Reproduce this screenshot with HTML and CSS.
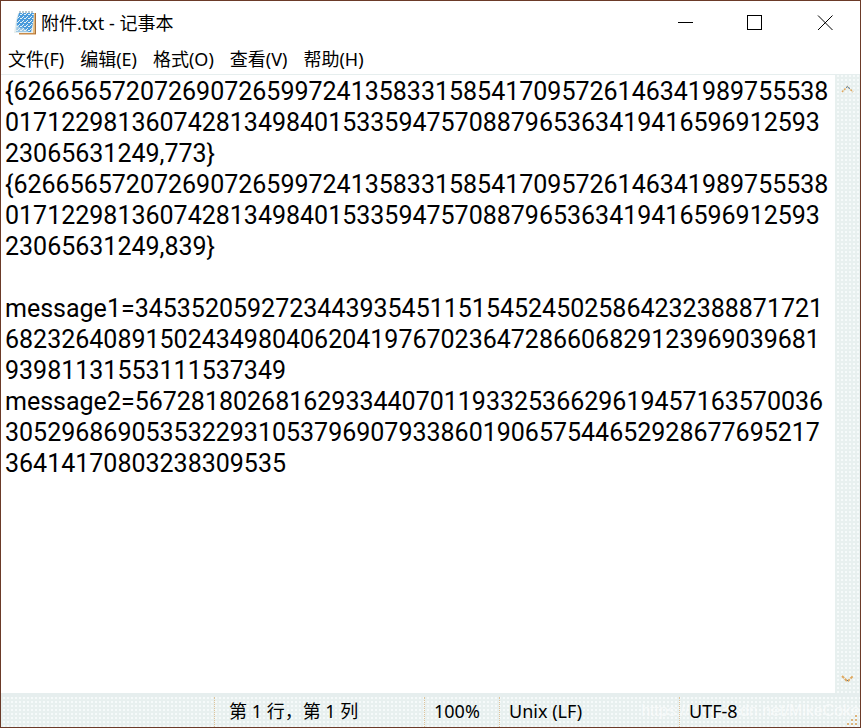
FILE: index.html
```html
<!DOCTYPE html>
<html lang="zh-CN">
<head>
<meta charset="utf-8">
<title>附件.txt - 记事本</title>
<link rel="stylesheet" href="styles.css">
</head>
<body>
<div class="window">
  <header class="titlebar">
    <svg class="app-icon" width="24" height="26" viewBox="0 0 24 26" aria-hidden="true">
      <defs>
        <pattern id="dither" width="4" height="4" patternUnits="userSpaceOnUse">
          <path d="M0 0h1v1h-1zM2 2h1v1h-1zM3 0h1v1h-1zM1 3h1v1h-1z" fill="#e6f1f4"/>
        </pattern>
      </defs>
      <path d="M20 3h3v21h-3z" fill="#e5b878"/>
      <path d="M6 23h17v1.500H6z" fill="#c98a48"/>
      <path d="M22 3h1v21h-1z" fill="#a8703c"/>
      <path d="M5 3h16l-1 20H1L3 10z" fill="#e6eeee"/>
      <path d="M6 3h15l-1 10-2 9H3L4 10z" fill="#4a9bdc"/>
      <path d="M6 3h15l-1 10-2 9H3L4 10z" fill="url(#dither)"/>
      <path d="M3 14l9 8H2zM9 17l7 5H7z" fill="#e6eeee" opacity=".55"/>
      <path d="M7 1v2M10 1v2M13 1v2M16 1v2M19 1v2" stroke="#6f8f9f" stroke-width="1"/>
    </svg>
    <h1 class="title">附件.txt - 记事本</h1>
    <div class="controls">
      <button type="button" aria-label="最小化"><svg width="16" height="16" viewBox="0 0 16 16" shape-rendering="crispEdges"><path d="M1 7.500h15" stroke="#000" fill="none"/></svg></button>
      <button type="button" aria-label="最大化"><svg width="16" height="16" viewBox="0 0 16 16" shape-rendering="crispEdges"><path d="M.5 .5h14v14H.5z" stroke="#000" fill="none"/></svg></button>
      <button type="button" aria-label="关闭"><svg width="16" height="16" viewBox="0 0 16 16"><path d="M1 .5l14.500 14.500M15.500 .5L1 15" stroke="#000" fill="none"/></svg></button>
    </div>
  </header>
  <nav class="menubar">
    <button type="button">文件(F)</button>
    <button type="button">编辑(E)</button>
    <button type="button">格式(O)</button>
    <button type="button">查看(V)</button>
    <button type="button">帮助(H)</button>
  </nav>
  <main class="editor">
    <textarea class="text" aria-label="文本编辑器" spellcheck="false">{6266565720726907265997241358331585417095726146341989755538017122981360742813498401533594757088796536341941659691259323065631249,773}
{6266565720726907265997241358331585417095726146341989755538017122981360742813498401533594757088796536341941659691259323065631249,839}

message1=3453520592723443935451151545245025864232388871721682326408915024349804062041976702364728660682912396903968193981131553111537349
message2=5672818026816293344070119332536629619457163570036305296869053532293105379690793386019065754465292867769521736414170803238309535</textarea>
    <div class="scrollbar">
      <button type="button" aria-label="向上滚动"><svg width="13" height="8" viewBox="0 0 13 8"><path d="M1 7l5.500-5.500L12 7" stroke="#dfa85f" stroke-width="1.500" stroke-dasharray="2 1" fill="none"/><path d="M5 3l1.500-1.500L9 4" stroke="#5d91c4" fill="none"/></svg></button>
      <button type="button" aria-label="向下滚动"><svg width="13" height="8" viewBox="0 0 13 8"><path d="M1 1l5.500 5.500L12 1" stroke="#dfa85f" stroke-width="2" stroke-dasharray="3 1" fill="none"/><path d="M6 6l1-1" stroke="#5d7184" fill="none"/></svg></button>
    </div>
  </main>
  <footer class="statusbar">
    <span></span>
    <span>第 1 行，第 1 列</span>
    <span>100%</span>
    <span>Unix (LF)</span>
    <span class="encoding">UTF-8</span>
    <div class="watermark">https://blog.csdn.net/MikeCoke</div>
    <svg class="grip" width="12" height="12" viewBox="0 0 12 12" aria-hidden="true"><path d="M8 1h2v2h-2zM4 5h2v2h-2zM8 5h2v2h-2zM0 9h2v2h-2zM4 9h2v2h-2zM8 9h2v2h-2z" fill="#dcb47c"/></svg>
  </footer>
</div>
</body>
</html>
```
FILE: styles.css
```css
* { box-sizing: border-box; }

body {
  margin: 0;
  font: 18px/24px "Noto Sans", "Noto Sans CJK SC", sans-serif;
  color: #000;
}

button {
  display: flex;
  align-items: center;
  justify-content: center;
  padding: 0;
  border: 0;
  background: none;
  font: inherit;
  color: inherit;
}

.window {
  display: flex;
  flex-direction: column;
  height: 100vh;
  border: 1px solid #6b3a28;
  background: #fff;
}

.titlebar {
  display: flex;
  align-items: center;
  height: 43px;
  padding-left: 12px;
}

.title {
  flex: 1;
  margin: 0 0 0 4px;
  font-size: 18px;
  font-weight: 400;
}

.controls { display: flex; }

.controls button {
  width: 70px;
  height: 43px;
}

.menubar {
  display: flex;
  gap: 16px;
  height: 31px;
  padding: 0 7px;
  border-bottom: 1px solid #e6eeee;
}

.editor {
  display: flex;
  flex: 1;
  min-height: 0;
}

.text {
  flex: 1;
  min-width: 0;
  margin: 0;
  padding: 1px 5px 0 4px;
  border: 0;
  outline: 0;
  resize: none;
  overflow: hidden;
  background: #fff;
  color: #000;
  font: 25px/31px Roboto, sans-serif;
  word-break: break-all;
}

.scrollbar,
.statusbar {
  background: conic-gradient(#f6fafa 25%, #e8f0ef 0) 0 0 / 4px 4px;
}

.scrollbar {
  display: flex;
  flex-direction: column;
  justify-content: space-between;
  width: 25px;
}

.scrollbar button { height: 28px; }

.statusbar {
  position: relative;
  display: grid;
  grid-template-columns: 213fr 210fr 75fr 180fr 181fr;
  height: 34px;
  border-top: 4px solid #e6eeee;
}

.statusbar span {
  padding: 2px 0 0 9px;
  border-left: 1px dotted #dfc39a;
}

.statusbar span:first-child { border-left: 0; }

.statusbar span:nth-child(2) { padding-left: 14px; }

.statusbar .encoding {
  position: relative;
  z-index: 1;
}

.watermark {
  position: absolute;
  right: 0;
  bottom: 4px;
  font: 16px/24px "Liberation Sans", sans-serif;
  color: #fff;
  opacity: .6;
}

.grip {
  position: absolute;
  right: 1px;
  bottom: 1px;
}
```
